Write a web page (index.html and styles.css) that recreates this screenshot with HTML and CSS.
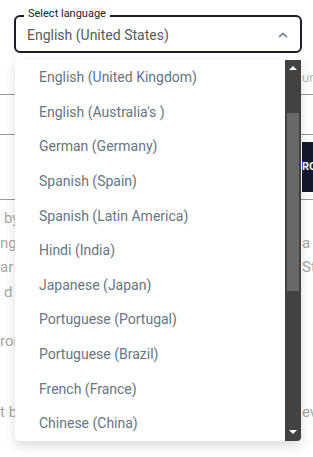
FILE: index.html
```html
<!DOCTYPE html>
<html>
<head>
    <title>Select language</title>
    <link rel="stylesheet" href="styles.css">
</head>
<body>
    <!-- the language select -->
    <div class="field">
        <span class="legend">Select language</span>
        <span class="value">English (United States)</span>
        <svg class="chevron" width="10" height="6" viewBox="0 0 10 6">
            <path d="M1 5 L5 1.5 L9 5" fill="none" stroke="#7d8f99" stroke-width="1.8"/>
        </svg>
    </div>

    <!-- the page behind the menu -->
    <div class="page">
        <div class="row top"><span class="l"></span><span class="r small">urt</span></div>
        <div class="row gap"></div>
        <div class="row action"><span class="l"></span><span class="btn">RO</span></div>
        <div class="text">
            <div class="row line"><span class="l in4">by</span><span class="r"></span></div>
            <div class="row line"><span class="l">ng</span><span class="r in4">a</span></div>
            <div class="row line"><span class="l">ar</span><span class="r">St</span></div>
            <div class="row line"><span class="l in4">d</span><span class="r"></span></div>
            <div class="row line"></div>
            <div class="row line"><span class="l">ror</span><span class="r"></span></div>
            <div class="row line"></div>
            <div class="row line"></div>
            <div class="row line last"><span class="l">t b</span><span class="r">ev</span></div>
        </div>
    </div>

    <!-- the open menu -->
    <div class="menu">
        <ul class="options">
            <li>English (United Kingdom)</li>
            <li>English (Australia's )</li>
            <li>German (Germany)</li>
            <li>Spanish (Spain)</li>
            <li>Spanish (Latin America)</li>
            <li>Hindi (India)</li>
            <li>Japanese (Japan)</li>
            <li>Portuguese (Portugal)</li>
            <li>Portuguese (Brazil)</li>
            <li>French (France)</li>
            <li>Chinese (China)</li>
        </ul>
        <div class="scrollbar">
            <span class="arrow up"></span>
            <span class="thumb"></span>
            <span class="arrow down"></span>
        </div>
    </div>
</body>
</html>
```

FILE: styles.css
```css
/* Page */
body {
    margin: 0;
    width: 313px;
    height: 457px;
    overflow: hidden;
    position: relative;
    background: #fff;
    font-family: Roboto, "Liberation Sans", sans-serif;
}

/* Select field */
.field {
    position: relative;
    box-sizing: border-box;
    height: 38px;
    margin: 15px 11px 0 14px;
    padding: 0 11px;
    border: 2px solid #1b1d2b;
    border-radius: 6px;
    display: flex;
    align-items: center;
    justify-content: space-between;
}
.legend {
    position: absolute;
    top: -9px;
    left: 8px;
    padding: 0 4px;
    background: #fff;
    font-size: 11px;
    line-height: 12px;
    color: #222;
}
.value {
    font-size: 14px;
    color: #535c62;
    margin-top: 2px;
}
.chevron {
    margin-right: 1px;
    margin-top: 1px;
}

/* Background page */
.page {
    color: #a8a8a8;
    font-size: 15px;
}
.row {
    display: flex;
    justify-content: space-between;
    box-sizing: border-box;
}
.r {
    width: 11px;
    white-space: nowrap;
}
.in4 {
    padding-left: 4px;
}
.top {
    height: 42px;
    padding-top: 17px;
    line-height: 16px;
    border-bottom: 1px solid #9a9a9a;
}
.small {
    font-size: 13px;
    color: #bbb;
}
.gap {
    height: 40px;
    border-bottom: 1px solid #9a9a9a;
}
.action {
    height: 65px;
    padding: 7px 0;
    border-bottom: 1px solid #9a9a9a;
}
.btn {
    width: 11px;
    height: 50px;
    background: #141a2e;
    color: #fff;
    font-size: 11px;
    font-weight: bold;
    line-height: 50px;
    white-space: nowrap;
    overflow: hidden;
}
.text {
    padding-top: 6px;
}
.line {
    height: 24.5px;
    line-height: 24.5px;
}
.last {
    margin-top: -2px;
}

/* Open menu */
.menu {
    position: absolute;
    top: 60px;
    left: 15px;
    width: 286px;
    height: 381px;
    display: flex;
    background: #fff;
    border-radius: 0 0 4px 4px;
    box-shadow: 0 5px 12px rgba(0, 0, 0, 0.14);
    overflow: hidden;
}
.options {
    flex: 1;
    margin: 0;
    padding: 0;
    list-style: none;
}
.options li {
    height: 34.6px;
    display: flex;
    align-items: center;
    padding-left: 24px;
    font-size: 14px;
    color: #66767f;
}

/* Scrollbar */
.scrollbar {
    position: relative;
    width: 16px;
    background: #424242;
}
.thumb {
    position: absolute;
    top: 53px;
    left: 2px;
    right: 2px;
    height: 178px;
    background: #686868;
}
.arrow {
    position: absolute;
    left: 4px;
    width: 0;
    height: 0;
    border-left: 4px solid transparent;
    border-right: 4px solid transparent;
}
.up {
    top: 6px;
    border-bottom: 4px solid #fff;
}
.down {
    bottom: 7px;
    border-top: 4px solid #fff;
}
```
